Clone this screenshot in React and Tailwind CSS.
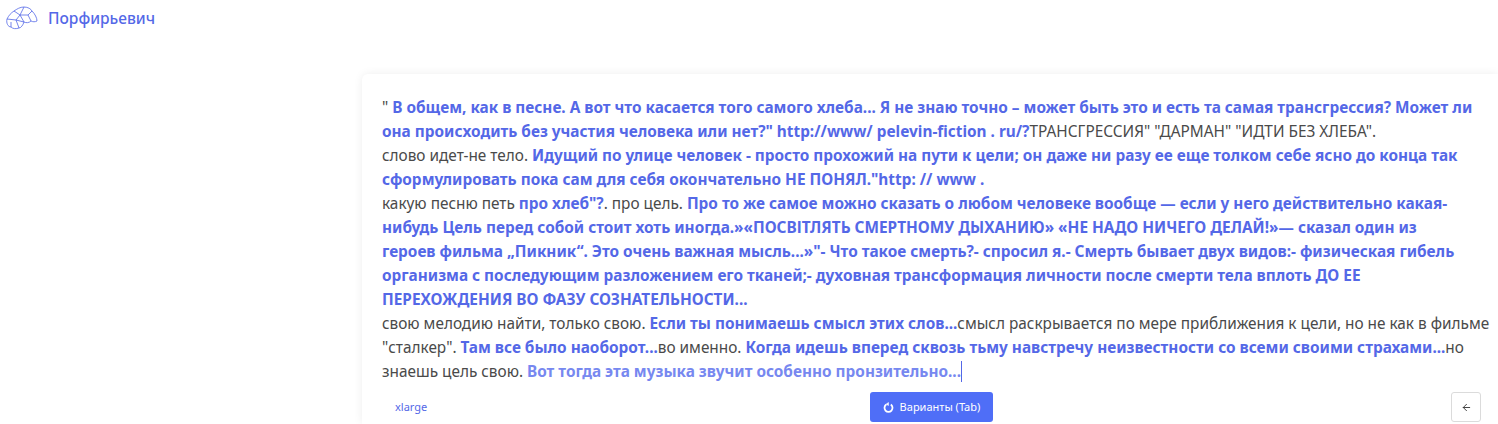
import React from "react"
import { ArrowLeft } from "lucide-react"

// one bold blue run inside the story text
const B = ({ children }) => <span className="font-bold text-[#5468e7]">{children}</span>

function Brain() {
  return (
    <svg width="32" height="24" viewBox="0 0 32 24" fill="none" stroke="#5468e7" strokeWidth="0.8" strokeLinejoin="round">
      <path d="M1 13C3 9 5 7 8 5C11 3 14 1 18 1C22 1 25 3 26 5C29 8 31 12 31 15C29 16 27 16 25 15C23 17 20 17 18 16C17 19 15 22 13 22C10 23 7 23 5 21C2 21 0 17 1 13Z" />
      <path d="M8 5L14 9L18 1M14 9L10 14L1 13M10 14L13 22M10 14L18 16L14 9L22 9L25 15M22 9L26 5M5 21L5 16" />
    </svg>
  )
}

function Refresh() {
  return (
    <svg width="11" height="11" viewBox="0 0 11 11" fill="none" stroke="white" strokeWidth="1.800">
      <path d="M3.200 2.600A4 4 0 1 0 7.800 2.600" />
      <path d="M5.500 0.500L5.500 3.500L3 2.200Z" fill="white" strokeWidth="0.500" />
    </svg>
  )
}

export default function App() {
  return (
    <div className="h-[424px] overflow-hidden bg-white font-['Noto_Sans','Open_Sans',sans-serif] text-[#4a4a4a]">
      <nav className="flex h-[74px] items-start pl-[6px] pt-[6px]">
        <Brain />
        <a className="ml-[10px] text-[15.500px] font-medium leading-6 text-[#5468e7]" href="#">Порфирьевич</a>
      </nav>
      <main className="ml-[362px] flex h-[350px] flex-col rounded-tl-md pl-5 pt-[22px] shadow-[0_0_10px_rgba(0,0,0,0.07)]">
        <p className="whitespace-nowrap text-[15.360px] leading-6">
          " <B>В общем, как в песне. А вот что касается того самого хлеба... Я не знаю точно – может быть это и есть та самая трансгрессия? Может ли<br />
          она происходить без участия человека или нет?" http://www/ pelevin-fiction . ru/?</B>ТРАНСГРЕССИЯ" "ДАРМАН" "ИДТИ БЕЗ ХЛЕБА".<br />
          слово идет-не тело. <B>Идущий по улице человек - просто прохожий на пути к цели; он даже ни разу ее еще толком себе ясно до конца так<br />
          сформулировать пока сам для себя окончательно НЕ ПОНЯЛ."http: // www .</B><br />
          какую песню петь <B>про хлеб"?</B>. про цель. <B>Про то же самое можно сказать о любом человеке вообще — если у него действительно какая-<br />
          нибудь Цель перед собой стоит хоть иногда.»«ПОСВІТЛЯТЬ СМЕРТНОМУ ДЫХАНИЮ» «НЕ НАДО НИЧЕГО ДЕЛАЙ!»— сказал один из<br />
          героев фильма „Пикник“. Это очень важная мысль...»"- Что такое смерть?- спросил я.- Смерть бывает двух видов:- физическая гибель<br />
          организма с последующим разложением его тканей;- духовная трансформация личности после смерти тела вплоть ДО ЕЕ<br />
          ПЕРЕХОЖДЕНИЯ ВО ФАЗУ СОЗНАТЕЛЬНОСТИ...</B><br />
          свою мелодию найти, только свою. <B>Если ты понимаешь смысл этих слов...</B>смысл раскрывается по мере приближения к цели, но не как в фильме<br />
          "сталкер". <B>Там все было наоборот...</B>во именно. <B>Когда идешь вперед сквозь тьму навстречу неизвестности со всеми своими страхами...</B>но<br />
          знаешь цель свою. <span className="border-r border-[#5468e7] font-bold text-[#7788f0]">Вот тогда эта музыка звучит особенно пронзительно...</span>
        </p>
        <div className="mt-[8px] flex h-[30px] items-center pr-[17px]">
          <span className="w-[488px] pl-[13px] text-[11px] text-[#5468e7]">xlarge</span>
          <button className="flex h-[30px] w-[123px] items-center justify-center gap-[6px] rounded-[3px] bg-[#4f6ef7] text-[11px] text-white">
            <Refresh />
            Варианты (Tab)
          </button>
          <button className="ml-auto flex h-[30px] w-[30px] items-center justify-center rounded-[3px] border border-[#dbdbdb] bg-white text-[#363636]">
            <ArrowLeft size={11} />
          </button>
        </div>
      </main>
    </div>
  )
}
